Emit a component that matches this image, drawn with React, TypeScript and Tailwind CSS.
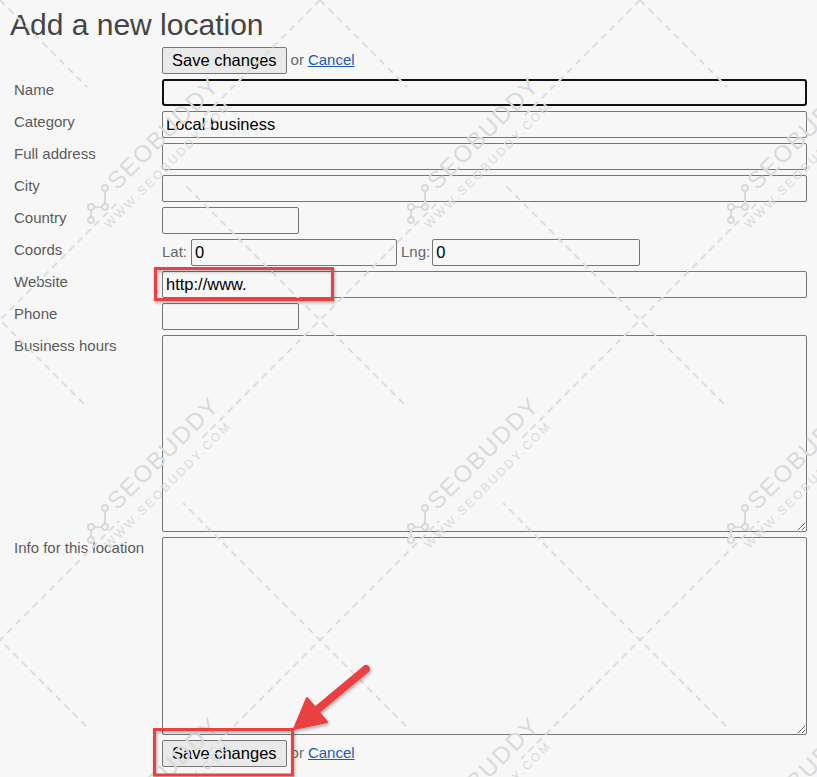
import type React from "react"

const field =
  "h-[27px] border border-[#767676] rounded-[2px] bg-transparent px-[3px] text-[16.5px] text-black outline-none"

function Row({ label, children }: { label?: string; children: React.ReactNode }) {
  return (
    <div className="flex">
      <div className="w-[152px] shrink-0 pl-[4px] pt-[2px] text-[15px] leading-[17px] text-[#5b5b5b]">{label}</div>
      <div className="flex flex-1 items-center">{children}</div>
    </div>
  )
}

function SaveRow() {
  return (
    <Row>
      <button className="h-[27px] rounded-[2px] border border-[#767676] bg-[#e9e9e9] px-[9px] text-[16.5px] text-black">
        Save changes
      </button>
      <span className="ml-[4px] text-[15px] text-[#666]">or</span>
      <a href="#" className="ml-[4px] text-[15px] text-[#1d5bbf] underline">
        Cancel
      </a>
    </Row>
  )
}

// faint SEOBUDDY watermark that sits over the whole screenshot
function Watermark() {
  const offsets = [-960, -640, -320, 0, 320, 640, 960]
  const sums = [320, 640, 960, 1280, 1600]
  const spots: [number, number][] = []
  for (const x of [160, 480, 800]) for (const y of [160, 480, 800]) spots.push([x, y])

  return (
    <svg className="pointer-events-none absolute inset-0" width="817" height="777" viewBox="0 0 817 777">
      <defs>
        <mask id="wm-gaps">
          <rect width="817" height="777" fill="white" />
          {spots.map(([x, y]) => (
            <circle key={`${x}-${y}`} cx={x - 25} cy={y - 25} r="68" fill="black" />
          ))}
        </mask>
      </defs>
      <g mask="url(#wm-gaps)" stroke="#dddddd" strokeWidth="2" strokeDasharray="7 5">
        {offsets.map((c) => (
          <line key={`d${c}`} x1={c} y1={0} x2={c + 900} y2={900} />
        ))}
        {sums.map((c) => (
          <line key={`s${c}`} x1={c} y1={0} x2={c - 900} y2={900} />
        ))}
      </g>
      {spots.map(([x, y]) => (
        <g key={`l${x}-${y}`} transform={`translate(${x} ${y})`} fill="#dadada">
          <g transform="translate(3 -27) rotate(-45)" fontFamily="'Liberation Sans', Arial, sans-serif">
            <text x="0" y="8.5" fontSize="24" letterSpacing="1.5" textAnchor="middle">
              SEOBUDDY
            </text>
            <text x="-19" y="30" fontSize="12" letterSpacing="2.5" textAnchor="middle">
              WWW.SEOBUDDY.COM
            </text>
          </g>
          <g stroke="#dadada" strokeWidth="2" fill="none">
            <path d="M-55 31 L-55 44 M-58 47 L-66 47 M-69 50 L-69 57" />
            <circle cx="-55" cy="28" r="3" />
            <circle cx="-55" cy="47" r="3" />
            <circle cx="-69" cy="47" r="3" />
            <circle cx="-69" cy="60" r="3" />
          </g>
        </g>
      ))}
    </svg>
  )
}

// red highlight boxes and arrow drawn over the form
function Annotations() {
  return (
    <svg className="pointer-events-none absolute inset-0" width="817" height="777" viewBox="0 0 817 777">
      <defs>
        <filter id="shade" x="-20%" y="-20%" width="140%" height="140%">
          <feDropShadow dx="1" dy="2" stdDeviation="1.5" floodColor="#000" floodOpacity="0.3" />
        </filter>
      </defs>
      <g filter="url(#shade)">
        <rect x="155.5" y="268.5" width="177" height="31" fill="none" stroke="#ea3f42" strokeWidth="3" />
        <rect x="154.5" y="729.5" width="138" height="45.5" fill="none" stroke="#ea3f42" strokeWidth="3" />
        <line x1="366" y1="669" x2="318" y2="709" stroke="#ea3f42" strokeWidth="8" strokeLinecap="round" />
        <polygon points="294,729 307,698 327,722" fill="#ea3f42" stroke="#ea3f42" strokeWidth="2" strokeLinejoin="round" />
      </g>
    </svg>
  )
}

export default function App() {
  return (
    <div className="relative min-h-screen w-full overflow-hidden bg-[#f7f7f7] font-['Liberation_Sans',Arial,sans-serif]">
      <div className="px-[10px] pt-[8px]">
        <h1 className="text-[30px] leading-[34px] text-[#444]">Add a new location</h1>

        <div className="mt-[5px] flex flex-col gap-[5px]">
          <SaveRow />
          <Row label="Name">
            <input className="h-[27px] w-full rounded-[3px] border-2 border-[#111] bg-transparent px-[3px] text-[16.5px] outline-none" />
          </Row>
          <Row label="Category">
            <input className={`${field} w-full`} defaultValue="Local business" />
          </Row>
          <Row label="Full address">
            <input className={`${field} w-full`} />
          </Row>
          <Row label="City">
            <input className={`${field} w-full`} />
          </Row>
          <Row label="Country">
            <input className={`${field} w-[137px]`} />
          </Row>
          <Row label="Coords">
            <span className="text-[15px] text-[#666]">Lat:</span>
            <input className={`${field} ml-[4px] w-[206px]`} defaultValue="0" />
            <span className="ml-[4px] text-[15px] text-[#666]">Lng:</span>
            <input className={`${field} ml-[2px] w-[208px]`} defaultValue="0" />
          </Row>
          <Row label="Website">
            <input className={`${field} w-full`} defaultValue="http://www." />
          </Row>
          <Row label="Phone">
            <input className={`${field} w-[137px]`} />
          </Row>
          <Row label="Business hours">
            <textarea className="block h-[197px] w-full rounded-[2px] border border-[#767676] bg-transparent outline-none" />
          </Row>
          <Row label="Info for this location">
            <textarea className="block h-[198px] w-full rounded-[2px] border border-[#767676] bg-transparent outline-none" />
          </Row>
          <SaveRow />
        </div>
      </div>

      <Watermark />
      <Annotations />
    </div>
  )
}
